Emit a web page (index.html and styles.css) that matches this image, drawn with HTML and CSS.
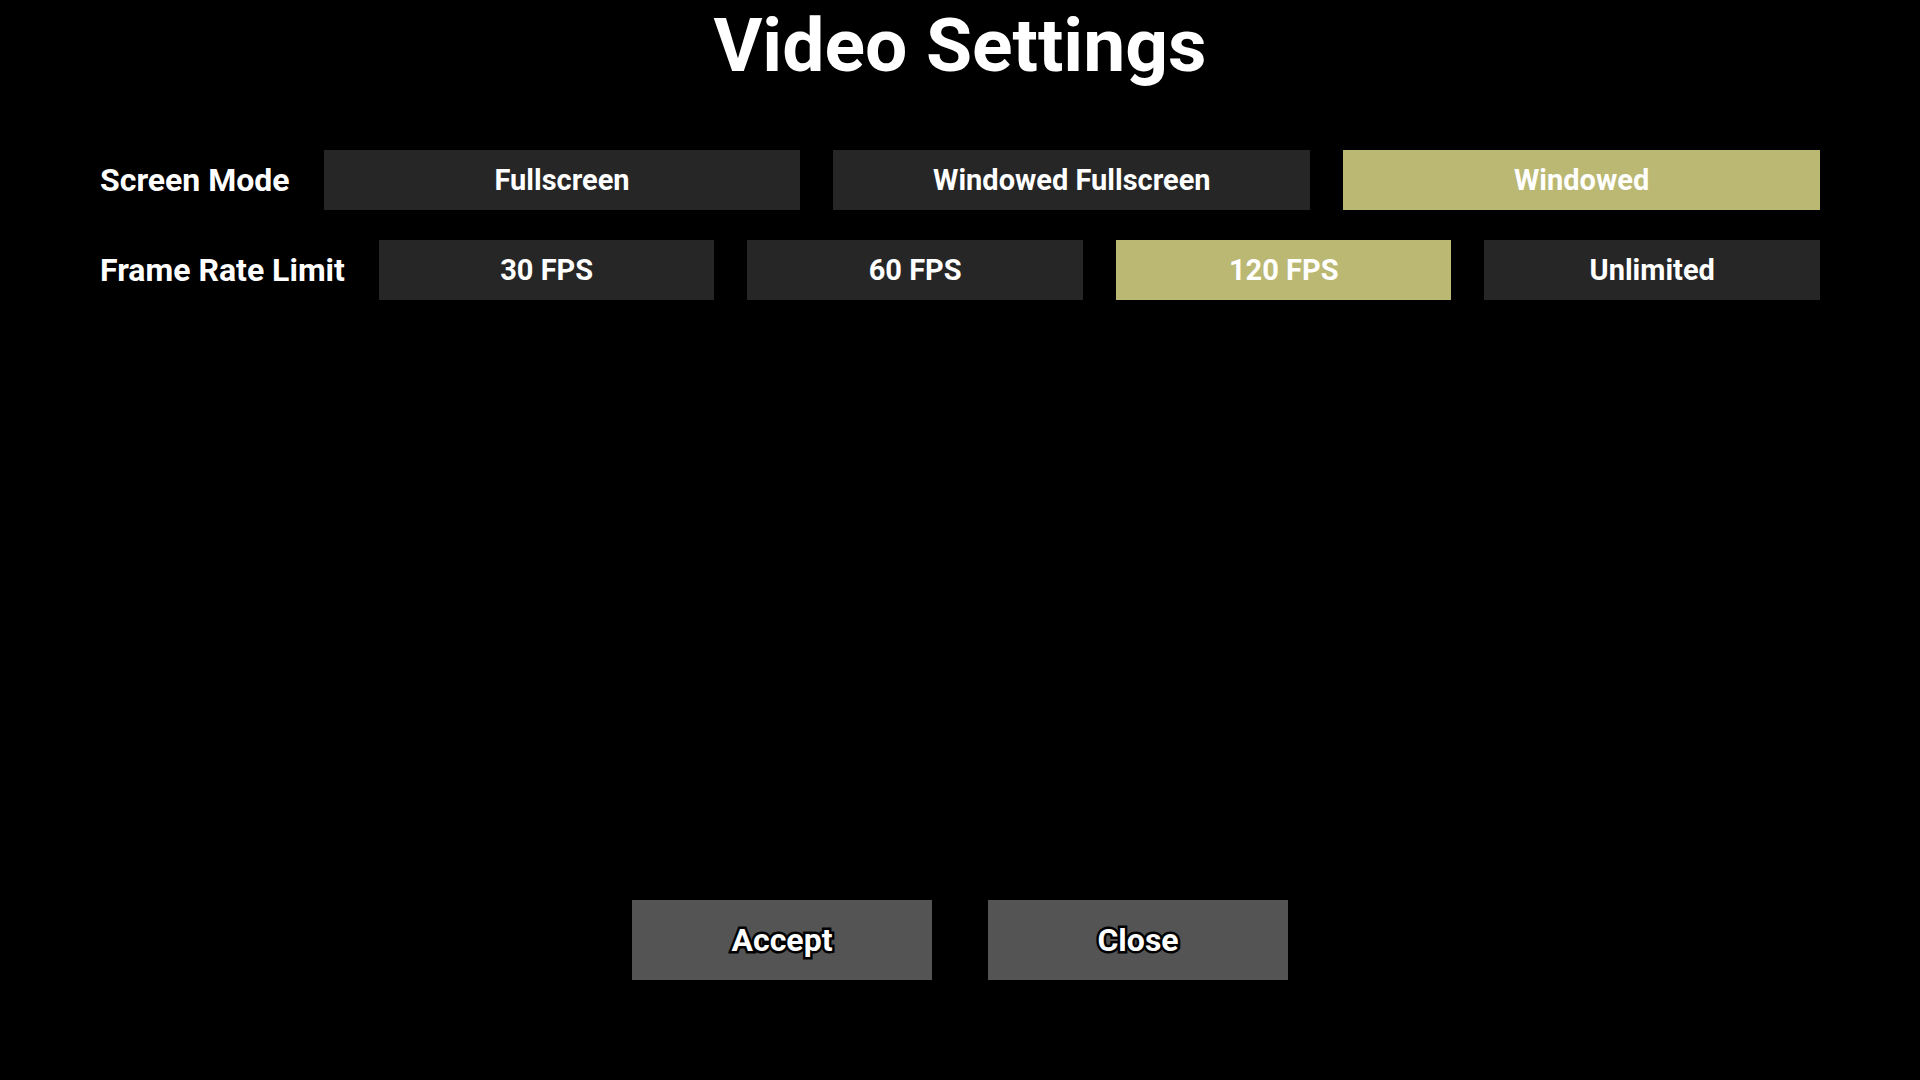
FILE: index.html
```html
<!DOCTYPE html>
<html>
<head>
<meta charset="utf-8">
<link rel="stylesheet" href="styles.css">
</head>
<body>
<div class="page">
  <h1 class="title">Video Settings</h1>
  <div class="rows">
    <div class="row">
      <div class="label">Screen Mode</div>
      <div class="options">
        <div class="opt">Fullscreen</div>
        <div class="opt">Windowed Fullscreen</div>
        <div class="opt selected">Windowed</div>
      </div>
    </div>
    <div class="row">
      <div class="label">Frame Rate Limit</div>
      <div class="options">
        <div class="opt">30 FPS</div>
        <div class="opt">60 FPS</div>
        <div class="opt selected">120 FPS</div>
        <div class="opt">Unlimited</div>
      </div>
    </div>
  </div>
  <div class="actions">
    <div class="action">Accept</div>
    <div class="action">Close</div>
  </div>
</div>
</body>
</html>
```
FILE: styles.css
```css
html, body {
  margin: 0;
  padding: 0;
  background: #000;
}
body {
  font-family: Roboto, "Liberation Sans", sans-serif;
  color: #fff;
}
.page {
  width: 1920px;
  height: 1080px;
  box-sizing: border-box;
  padding: 0 100px 100px;
  display: flex;
  flex-direction: column;
}
.title {
  margin: 0;
  font-size: 75px;
  line-height: 90px;
  font-weight: 700;
  text-align: center;
}
.rows {
  margin-top: 60px;
  display: flex;
  flex-direction: column;
  gap: 30px;
}
.row {
  display: flex;
  align-items: center;
  gap: 34px;
}
.label {
  font-size: 32px;
  font-weight: 700;
  white-space: nowrap;
}
.options {
  flex: 1;
  display: flex;
  gap: 33px;
}
.opt {
  flex: 1;
  height: 60px;
  background: #262626;
  display: flex;
  align-items: center;
  justify-content: center;
  font-size: 29px;
  font-weight: 700;
}
.opt.selected {
  background: #bab872;
}
.actions {
  margin-top: auto;
  display: flex;
  justify-content: center;
  gap: 56px;
}
.action {
  width: 300px;
  height: 80px;
  background: #545454;
  display: flex;
  align-items: center;
  justify-content: center;
  font-size: 32px;
  font-weight: 700;
  color: #fff;
  -webkit-text-stroke: 5px #000;
  paint-order: stroke fill;
}
```
